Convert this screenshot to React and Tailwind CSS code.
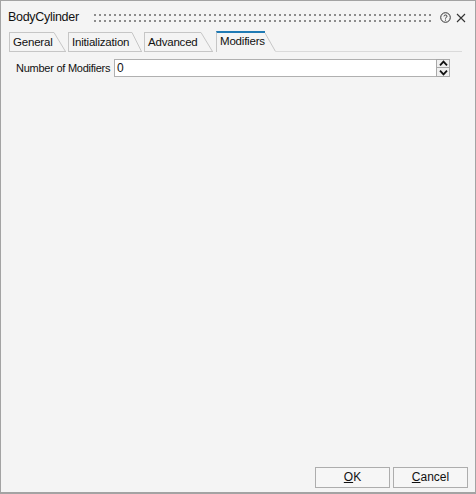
import React from 'react'

const tabs = [
  { label: 'General', box: 'w-[45px]', slant: 12, gap: 'mr-[2px]' },
  { label: 'Initialization', box: 'w-[64px]', slant: 10, gap: 'mr-[2px]' },
  { label: 'Advanced', box: 'w-[57px]', slant: 12, gap: 'mr-[3px]' },
  { label: 'Modifiers', box: 'w-[49px]', slant: 11, gap: '', active: true },
]

function Slant({ w, active }) {
  return (
    <svg width={w} height="20" className="block shrink-0">
      <line x1="0" y1={active ? 1 : 0.5} x2={w - 0.5} y2="19.5" stroke="#c6c6c6" strokeWidth="1" />
      {!active && <line x1="0" y1="19.5" x2={w} y2="19.5" stroke="#c6c6c6" strokeWidth="1" />}
    </svg>
  )
}

function Tab({ tab }) {
  if (tab.active) {
    return (
      <div className="flex items-end h-[21px]">
        <div className={`${tab.box} h-[21px] border-l border-[#c6c6c6] border-t-2 border-t-[#1f7ab4] pl-[3px] leading-[17px] text-[11.5px] tracking-[-0.2px]`}>
          {tab.label}
        </div>
        <Slant w={tab.slant} active />
      </div>
    )
  }
  return (
    <div className={`flex items-end h-[20px] ${tab.gap}`}>
      <div className={`${tab.box} h-[20px] border-l border-t border-b border-[#c6c6c6] pl-[3px] leading-[18px] text-[11.5px] tracking-[-0.2px]`}>
        {tab.label}
      </div>
      <Slant w={tab.slant} />
    </div>
  )
}

function Arrow({ up }) {
  return (
    <svg width="9" height="7" viewBox="0 0 9 7" className="block">
      {up ? (
        <path d="M1 5.4 L4.5 1.6 L8 5.4" fill="none" stroke="#111" strokeWidth="1.8" />
      ) : (
        <path d="M1 1.6 L4.5 5.4 L8 1.6" fill="none" stroke="#111" strokeWidth="1.8" />
      )}
    </svg>
  )
}

export default function App() {
  return (
    <div className="w-[476px] h-[494px] bg-[#f4f4f4] border border-[#a3a3a3] border-b-2 flex flex-col font-['Liberation_Sans',Arial,sans-serif] text-[#111]">
      {/* Title bar */}
      <div className="h-[30px] flex items-center pl-[7px] pr-[9px] pt-[3px]">
        <span className="text-[12.5px] tracking-[-0.3px]">BodyCylinder</span>
        <div className="flex-1 h-[8px] ml-[15px] mr-[8px] bg-[radial-gradient(circle_at_1px_1px,#8c8c8c_1.1px,transparent_1.4px)] bg-[length:5px_6px]" />
        <svg width="11" height="11" viewBox="0 0 11 11" className="block mr-[5px]">
          <circle cx="5.5" cy="5.5" r="4.8" fill="none" stroke="#333" strokeWidth="1" />
          <path d="M4 4.3 C4 2.6 7 2.6 7 4.2 C7 5.3 5.5 5.3 5.5 6.6" fill="none" stroke="#333" strokeWidth="1" />
          <rect x="5" y="7.6" width="1" height="1" fill="#333" />
        </svg>
        <svg width="10" height="10" viewBox="0 0 10 10" className="block">
          <path d="M1 1 L9 9 M9 1 L1 9" stroke="#333" strokeWidth="1.1" />
        </svg>
      </div>

      {/* Tabs */}
      <div className="flex items-end pl-[8px] h-[21px]">
        {tabs.map(t => <Tab key={t.label} tab={t} />)}
        <div className="w-[186px] h-[20px] border-b border-[#dadada]" />
      </div>

      {/* Content */}
      <div className="flex-1 flex flex-col pl-[15px] pt-[7px]">
        <div className="flex items-center h-[18px]">
          <span className="w-[98px] text-[11px] tracking-[-0.25px] whitespace-nowrap">Number of Modifiers</span>
          <div className="w-[323px] h-[18px] border border-[#b0b0b0] bg-white text-[12px] pl-[2px] leading-[16px]">0</div>
          <div className="w-[14px] h-[18px] flex flex-col -ml-[1px]">
            <div className="h-[9px] border border-[#a8a8a8] bg-[#f0f0f0] flex items-center justify-center">
              <Arrow up />
            </div>
            <div className="h-[9px] border border-t-0 border-[#a8a8a8] bg-[#f0f0f0] flex items-center justify-center">
              <Arrow />
            </div>
          </div>
        </div>
      </div>

      {/* Buttons */}
      <div className="flex justify-end gap-[3px] pr-[7px] pb-[4px]">
        <button className="w-[75px] h-[21px] border border-[#adadad] bg-[#f6f6f6] text-[12px] leading-[19px]">
          <u>O</u>K
        </button>
        <button className="w-[75px] h-[21px] border border-[#adadad] bg-[#f6f6f6] text-[12px] leading-[19px]">
          <u>C</u>ancel
        </button>
      </div>
    </div>
  )
}
